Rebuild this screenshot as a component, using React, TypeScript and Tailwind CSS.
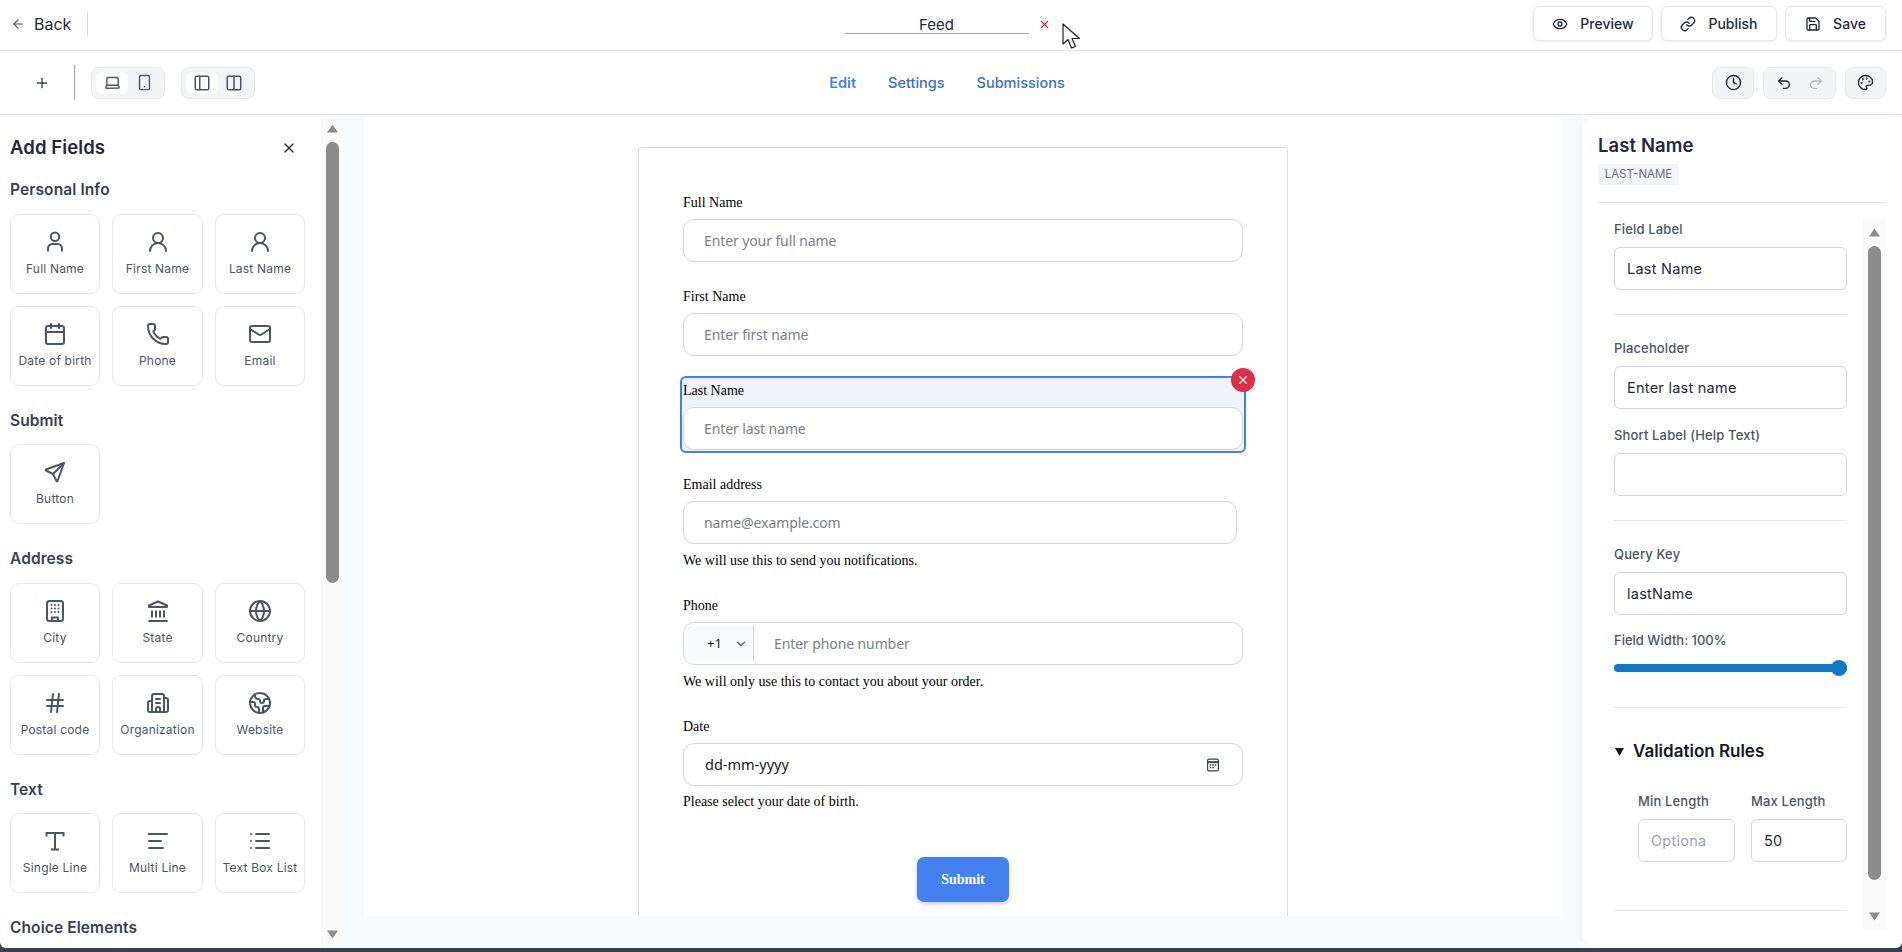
import { ReactNode } from 'react'
import {
  ArrowLeft, Plus, Laptop, Smartphone, PanelLeft, Columns2, Clock, Undo2, Redo2, Palette,
  Eye, Link, Save, X, UserRound, Calendar, Phone, Mail, Globe, Hash,
  Building2, Earth, AlignLeft, List, ChevronDown,
} from 'lucide-react'
import { TbSend } from 'react-icons/tb'

const ui = "font-['Inter',sans-serif]"
const serif = "font-['Liberation_Serif',serif]"
const fieldFont = "font-['Noto_Sans',sans-serif]"

function SmallUser() {
  return (
    <svg width="24" height="24" viewBox="0 0 24 24" fill="none" stroke="currentColor" strokeWidth="2">
      <circle cx="12" cy="6.8" r="4.2" />
      <path d="M5 21.5v-3a4.5 4.5 0 0 1 4.5-4.5h5a4.5 4.5 0 0 1 4.5 4.5v3" />
    </svg>
  )
}

function CityIcon() {
  return (
    <svg width="24" height="24" viewBox="0 0 24 24" fill="none" stroke="currentColor" strokeWidth="2" strokeLinejoin="round">
      <rect x="4" y="2" width="16" height="20" rx="2.5" />
      <path d="M9 22v-3.5h6V22" />
      <g fill="currentColor" stroke="none">
        <circle cx="8.5" cy="6" r="1" /><circle cx="12" cy="6" r="1" /><circle cx="15.5" cy="6" r="1" />
        <circle cx="8.5" cy="9.5" r="1" /><circle cx="12" cy="9.5" r="1" /><circle cx="15.5" cy="9.5" r="1" />
        <circle cx="8.5" cy="13" r="1" /><circle cx="12" cy="13" r="1" /><circle cx="15.5" cy="13" r="1" />
      </g>
    </svg>
  )
}

function StateIcon() {
  return (
    <svg width="24" height="24" viewBox="0 0 24 24" fill="none" stroke="currentColor" strokeWidth="2" strokeLinejoin="round">
      <path d="M12 2.5 3 6.5v1.5h18V6.5z" />
      <path d="M6 11.5v7M10 11.5v7M14 11.5v7M18 11.5v7M2.5 22h19" />
    </svg>
  )
}

function SingleLineIcon() {
  return (
    <svg width="24" height="24" viewBox="0 0 24 24" fill="none" stroke="currentColor" strokeWidth="2">
      <path d="M3.5 7.5V4h17v3.5M12 4v16.5M8 20.5h8" />
    </svg>
  )
}

const personal = [
  { label: 'Full Name', icon: <SmallUser /> },
  { label: 'First Name', icon: <UserRound size={24} strokeWidth={2} /> },
  { label: 'Last Name', icon: <UserRound size={24} strokeWidth={2} /> },
  { label: 'Date of birth', icon: <Calendar size={24} strokeWidth={2} /> },
  { label: 'Phone', icon: <Phone size={24} strokeWidth={2} /> },
  { label: 'Email', icon: <Mail size={24} strokeWidth={2} /> },
]
const address = [
  { label: 'City', icon: <CityIcon /> },
  { label: 'State', icon: <StateIcon /> },
  { label: 'Country', icon: <Globe size={24} strokeWidth={2} /> },
  { label: 'Postal code', icon: <Hash size={24} strokeWidth={2} /> },
  { label: 'Organization', icon: <Building2 size={24} strokeWidth={2} /> },
  { label: 'Website', icon: <Earth size={24} strokeWidth={2} /> },
]
const text = [
  { label: 'Single Line', icon: <SingleLineIcon /> },
  { label: 'Multi Line', icon: <AlignLeft size={24} strokeWidth={2} /> },
  { label: 'Text Box List', icon: <List size={24} strokeWidth={2} /> },
]

function FieldCard({ label, icon }: { label: string; icon: ReactNode }) {
  return (
    <div className="flex h-[80px] flex-col items-center rounded-[9px] border border-[#e5e7eb] bg-white pt-[15px]">
      <div className="flex h-6 w-6 items-center justify-center text-[#4b5563]">{icon}</div>
      <span className="mt-[7px] text-[12px] leading-4 tracking-[0.2px] text-[#4b5563] whitespace-nowrap">{label}</span>
    </div>
  )
}

function Section({ title, items, first }: { title: string; items: { label: string; icon: ReactNode }[]; first?: boolean }) {
  return (
    <div className={first ? 'mt-[18px]' : 'mt-[25px]'}>
      <h3 className="mb-[13.5px] h-5 text-[15.5px] font-semibold leading-5 tracking-[0.1px] text-[#374151]">{title}</h3>
      <div className="grid grid-cols-[90px_91px_90px] gap-x-[12px] gap-y-[12px]">
        {items.map(i => <FieldCard key={i.label} {...i} />)}
      </div>
    </div>
  )
}

function Scrollbar({ thumbTop, thumbH, className }: { thumbTop: string; thumbH: string; className: string }) {
  return (
    <div className={`flex shrink-0 flex-col items-center bg-[#fafafa] ${className}`}>
      <svg className="mt-[9px] shrink-0" width="13" height="9" viewBox="0 0 13 9"><path d="M6.5 0.5 12 8.5H1z" fill="#8c8c8c" /></svg>
      <div className={`w-[13px] shrink-0 rounded-full bg-[#8c8c8c] ${thumbTop} ${thumbH}`} />
      <svg className="mt-auto mb-[9px] shrink-0" width="13" height="9" viewBox="0 0 13 9"><path d="M6.5 8.5 12 0.5H1z" fill="#8c8c8c" /></svg>
    </div>
  )
}

function FormField({ label, placeholder, hint, width }: { label: string; placeholder: string; hint?: string; width?: string }) {
  return (
    <div>
      <label className={`mb-[7px] block h-5 text-[14px] leading-[22px] text-black ${serif}`}>{label}</label>
      <input
        readOnly
        placeholder={placeholder}
        className={`block h-[43px] rounded-[11px] border border-[#d1d5db] bg-white pl-[20px] text-[14px] tracking-[-0.1px] outline-none placeholder:text-[#7b8089] ${fieldFont} ${width ?? 'w-[560px]'}`}
      />
      {hint && <p className={`mt-[6px] h-5 text-[14px] leading-[22px] text-black ${serif}`}>{hint}</p>}
    </div>
  )
}

function PanelInput({ value, placeholder, pad }: { value?: string; placeholder?: string; pad?: string }) {
  return (
    <input
      readOnly
      value={value ?? ''}
      placeholder={placeholder}
      className={`block h-[43px] w-full rounded-[6px] border border-[#d1d5db] bg-white pl-[12px] text-[14.5px] tracking-[0.25px] text-[#1f2937] outline-none placeholder:text-[#9ca3af] ${pad ?? 'pr-[12px]'}`}
    />
  )
}

function PanelLabel({ children, top }: { children: ReactNode; top: string }) {
  return <label className={`mb-[8px] block h-5 text-[13px] font-medium leading-5 tracking-[0.15px] text-[#4b5563] ${top}`}>{children}</label>
}

function HeaderButton({ icon, label, width }: { icon: ReactNode; label: string; width: string }) {
  return (
    <button className={`flex h-[35px] items-center justify-center gap-[12px] rounded-[6px] border border-[#e5e7eb] bg-white text-[14px] font-medium text-[#1f2937] shadow-[0_1px_2px_rgba(0,0,0,0.08)] ${width}`}>
      {icon}
      {label}
    </button>
  )
}

export default function App() {
  return (
    <div className={`flex h-screen w-full flex-col overflow-hidden bg-[#374151] pb-[4px] ${ui}`}>
      <div className="relative flex min-h-0 flex-1 flex-col overflow-hidden rounded-b-[6px] bg-white">
        {/* Top bar */}
        <header className="flex h-[51px] shrink-0 items-center border-b border-[#e5e7eb] pb-[3px] pr-[16px]">
          <div className="flex flex-1 items-center">
            <ArrowLeft size={14} className="ml-[11px] text-[#4b5563]" />
            <span className="ml-[9px] text-[16px] text-[#1f2937]">Back</span>
            <div className="ml-[16px] h-[24px] w-px bg-[#d1d5db]" />
          </div>
          <div className="flex items-center pl-[14px] pr-[5px]">
            <div className="h-[21px] w-[184px] border-b border-[#9ca3af] text-center text-[15px] leading-[23px] text-[#1f2937]">Feed</div>
            <X size={13} className="ml-[9px] mt-[1px] text-[#e11d48]" />
          </div>
          <div className="flex flex-1 justify-end gap-[8px]">
            <HeaderButton icon={<Eye size={16} strokeWidth={2} />} label="Preview" width="w-[120px]" />
            <HeaderButton icon={<Link size={16} strokeWidth={2} />} label="Publish" width="w-[116px]" />
            <HeaderButton icon={<Save size={16} strokeWidth={2} />} label="Save" width="w-[101px]" />
          </div>
        </header>

        {/* Toolbar */}
        <div className="flex h-[64px] shrink-0 items-center border-b border-[#e5e7eb] pr-[16px]">
          <div className="flex flex-1 items-center">
            <Plus size={16} className="ml-[34px] text-[#374151]" />
            <div className="ml-[24px] h-[35px] w-px bg-[#9ca3af]" />
            <div className="ml-[16px] flex h-[32px] w-[74px] items-center justify-between rounded-[8px] border border-[#e5e7eb] bg-[#f3f4f6] px-[4px]">
              <div className="flex h-[22px] w-[32px] items-center justify-center rounded-[6px] bg-white text-[#4b5563]"><Laptop size={17} strokeWidth={2} /></div>
              <div className="flex h-[22px] w-[32px] items-center justify-center text-[#4b5563]"><Smartphone size={17} strokeWidth={2} /></div>
            </div>
            <div className="ml-[16px] flex h-[32px] w-[74px] items-center justify-between rounded-[8px] border border-[#e5e7eb] bg-[#f3f4f6] px-[4px]">
              <div className="flex h-[22px] w-[32px] items-center justify-center rounded-[6px] bg-white text-[#4b5563]"><PanelLeft size={18} strokeWidth={2} /></div>
              <div className="flex h-[22px] w-[32px] items-center justify-center text-[#4b5563]"><Columns2 size={18} strokeWidth={2} /></div>
            </div>
          </div>
          <nav className="flex items-center gap-[32px] pl-[8px] text-[14.5px]">
            <span className="font-semibold text-[#3b82f6]">Edit</span>
            <span className="font-medium text-[#3b6fd4]">Settings</span>
            <span className="font-medium text-[#3b6fd4]">Submissions</span>
          </nav>
          <div className="flex flex-1 justify-end gap-[9px]">
            <div className="flex h-[32px] w-[42px] items-center justify-center rounded-[8px] border border-[#e5e7eb] bg-[#f3f4f6] text-[#1f2937]"><Clock size={17} strokeWidth={2} /></div>
            <div className="flex h-[32px] w-[73px] items-center justify-center gap-[16px] rounded-[8px] border border-[#e5e7eb] bg-[#f3f4f6]">
              <Undo2 size={16} strokeWidth={2} className="text-[#1f2937]" />
              <Redo2 size={16} strokeWidth={2} className="text-[#b6bac1]" />
            </div>
            <div className="flex h-[32px] w-[41px] items-center justify-center rounded-[8px] border border-[#e5e7eb] bg-[#f3f4f6] text-[#1f2937]"><Palette size={17} strokeWidth={2} /></div>
          </div>
        </div>

        {/* Main */}
        <div className="flex min-h-0 flex-1">
          {/* Add fields panel */}
          <aside className="flex w-[344px] shrink-0">
            <div className="w-[321px] overflow-hidden pl-[10px] pr-[16px] pt-[19px]">
              <div className="flex h-7 w-[295px] items-center justify-between">
                <h2 className="text-[18.5px] font-semibold tracking-[0.1px] text-[#1f2937]">Add Fields</h2>
                <X size={16} className="mr-[8px] text-[#1f2937]" />
              </div>
              <Section first title="Personal Info" items={personal} />
              <Section title="Submit" items={[{ label: 'Button', icon: <TbSend size={26} strokeWidth={2} /> }]} />
              <Section title="Address" items={address} />
              <Section title="Text" items={text} />
              <Section title="Choice Elements" items={[]} />
            </div>
            <Scrollbar className="w-[23px]" thumbTop="mt-[9px]" thumbH="h-[441px]" />
          </aside>

          {/* Canvas */}
          <main className="flex min-w-0 flex-1 flex-col bg-[#f9fafb] px-[20px] pb-[32px]">
            <div className="min-h-0 flex-1 overflow-hidden bg-white pt-[32px]">
              <div className="mx-auto h-[900px] w-[650px] rounded-t-[3px] border border-[#d9dce1] px-[44px] pt-[44px]">
                <FormField label="Full Name" placeholder="Enter your full name" />
                <div className="mt-[24px]"><FormField label="First Name" placeholder="Enter first name" /></div>
                <div className="relative -mx-[3px] mt-[20px] rounded-[6px] border-2 border-[#4080ee] bg-[#eff3fe] px-px pt-[2px]">
                  <FormField label="Last Name" placeholder="Enter last name" />
                  <div className="h-[1px]" />
                  <button className="absolute -right-[11px] -top-[10px] flex h-6 w-6 items-center justify-center rounded-full bg-[#e02d44] text-white">
                    <X size={14} strokeWidth={2} />
                  </button>
                </div>
                <div className="mt-[21px]"><FormField label="Email address" placeholder="name@example.com" hint="We will use this to send you notifications." width="w-[554px]" /></div>
                <div className="mt-[25px]">
                  <label className={`mb-[7px] block h-5 text-[14px] leading-[22px] text-black ${serif}`}>Phone</label>
                  <div className="flex h-[43px] w-[560px] items-center rounded-[11px] border border-[#d1d5db] bg-white">
                    <div className="flex h-[35px] w-[70px] items-center rounded-l-[10px] border-r border-[#d1d5db] bg-[#f9fafb] pl-[23px]">
                      <span className={`text-[13px] text-[#111827] ${fieldFont}`}>+1</span>
                      <ChevronDown size={14} strokeWidth={2} className="ml-[12px] text-[#4b5563]" />
                    </div>
                    <span className={`ml-[20px] text-[14px] tracking-[-0.1px] text-[#7b8089] ${fieldFont}`}>Enter phone number</span>
                  </div>
                  <p className={`mt-[6px] h-5 text-[14px] leading-[22px] text-black ${serif}`}>We will only use this to contact you about your order.</p>
                </div>
                <div className="mt-[25px]">
                  <label className={`mb-[7px] block h-5 text-[14px] leading-[22px] text-black ${serif}`}>Date</label>
                  <div className="flex h-[43px] w-[560px] items-center justify-between rounded-[11px] border border-[#d1d5db] bg-white pl-[21px] pr-[22px]">
                    <span className={`text-[14.5px] text-[#111827] ${fieldFont}`}>dd-mm-yyyy</span>
                    <svg width="14" height="14" viewBox="0 0 14 14" fill="none" stroke="#374151" strokeWidth="1.2">
                      <rect x="1.6" y="1.1" width="10.8" height="11.8" rx="1.5" />
                      <path d="M1.6 4.2h10.8" strokeWidth="2" />
                      <path d="M3.8 7h1.5M6.3 7h1.5M8.8 7h1.5M3.8 9.5h1.5M6.3 9.5h1.5" strokeWidth="1.4" />
                    </svg>
                  </div>
                  <p className={`mt-[6px] h-5 text-[14px] leading-5 text-black ${serif}`}>Please select your date of birth.</p>
                </div>
                <button className={`mx-auto mt-[45px] block h-[45px] w-[92px] rounded-[7px] bg-[#4281ee] text-[14px] font-bold text-white shadow-[0_2px_4px_rgba(0,0,0,0.2)] ${serif}`}>Submit</button>
              </div>
            </div>
          </main>

          {/* Field settings panel */}
          <aside className="flex w-[320px] shrink-0 flex-col rounded-[16px] bg-white pl-[16px] pr-[16px] pt-[16px] shadow-[-2px_0_8px_rgba(0,0,0,0.05)]">
            <h2 className="h-7 text-[18.5px] font-semibold leading-7 tracking-[0.1px] text-[#1f2937]">Last Name</h2>
            <div className="mt-[5px] flex h-[21px] w-[81px] items-center justify-center rounded-[3px] bg-[#f3f4f6] text-[11.5px] text-[#6b7280]">LAST-NAME</div>
            <div className="mt-[17px] h-px w-full shrink-0 bg-[#e5e7eb]" />
            <div className="mt-[16px] flex justify-between">
              <div className="ml-[16px] h-[711px] w-[233px] overflow-hidden">
                <PanelLabel top="">Field Label</PanelLabel>
                <PanelInput value="Last Name" />
                <div className="mt-[24px] h-px bg-[#e5e7eb]" />
                <PanelLabel top="mt-[23px]">Placeholder</PanelLabel>
                <PanelInput value="Enter last name" />
                <PanelLabel top="mt-[16px]">Short Label (Help Text)</PanelLabel>
                <PanelInput />
                <div className="mt-[24px] h-px bg-[#e5e7eb]" />
                <PanelLabel top="mt-[23px]">Query Key</PanelLabel>
                <PanelInput value="lastName" />
                <PanelLabel top="mt-[15px] !mb-0 !tracking-normal">Field Width: 100%</PanelLabel>
                <div className="relative mt-[14px] h-[8px] w-full rounded-full bg-[#1178c8]">
                  <div className="absolute -top-[4px] right-0 h-[16px] w-[16px] rounded-full bg-[#1178c8]" />
                </div>
                <div className="mt-[35px] h-px bg-[#e5e7eb]" />
                <div className="mt-[32px] flex h-6 items-center">
                  <svg className="ml-[1px]" width="9" height="8" viewBox="0 0 9 8"><path d="M0 0h9L4.5 8z" fill="#111827" /></svg>
                  <span className="ml-[9px] text-[17px] font-semibold text-[#111827]">Validation Rules</span>
                </div>
                <div className="ml-[24px] mt-[27px] grid grid-cols-[97px_96px] gap-x-[16px]">
                  <div>
                    <PanelLabel top="">Min Length</PanelLabel>
                    <PanelInput placeholder="Optional" pad="pr-[27px]" />
                  </div>
                  <div>
                    <PanelLabel top="">Max Length</PanelLabel>
                    <PanelInput value="50" />
                  </div>
                </div>
                <div className="mt-[48px] h-px bg-[#e5e7eb]" />
              </div>
              <Scrollbar className="h-[711px] w-[23px]" thumbTop="mt-[9px]" thumbH="h-[634px]" />
            </div>
          </aside>
        </div>

        {/* Mouse pointer in the capture */}
        <svg className="absolute left-[1062px] top-[23px]" width="20" height="29" viewBox="0 0 20 29" fill="#fff" stroke="#222" strokeWidth="1.2" strokeLinejoin="round">
          <path d="M1 1v20l5-4.5L9.5 25l4-1.5-3.5-8h7.5z" />
        </svg>
      </div>
    </div>
  )
}
